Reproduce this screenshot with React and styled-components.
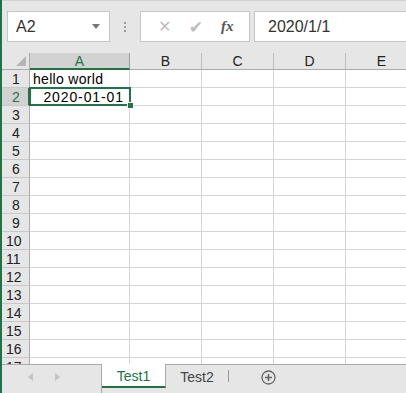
import React from 'react';
import styled, { createGlobalStyle } from 'styled-components';

const GREEN = '#217346';
const GRID = '#d4d4d4';

const GlobalStyle = createGlobalStyle`
  html, body {
    margin: 0;
    padding: 0;
    background: #ffffff;
    overflow: hidden;
  }
  * {
    box-sizing: border-box;
  }
`;

const Window = styled.div`
  width: 406px;
  height: 393px;
  display: flex;
  flex-direction: column;
  border-left: 2px solid ${GREEN};
  font-family: "Liberation Sans", "Noto Sans CJK JP", sans-serif;
  background: #ffffff;
  overflow: hidden;
`;

const Toolbar = styled.div`
  height: 53px;
  flex: none;
  display: flex;
  align-items: center;
  padding: 1px 0 1px 5px;
  background: #e6e6e6;
  border-top: 1px solid #d2d2d2;
`;

const Box = styled.div`
  height: 31px;
  width: ${p => p.$w};
  flex: ${p => (p.$grow ? '1' : 'none')};
  display: flex;
  align-items: center;
  background: #ffffff;
  border: 1px solid #c6c6c6;
  border-right: ${p => (p.$grow ? 'none' : '1px solid #c6c6c6')};
  margin-top: -1px;
`;

const NameText = styled.span`
  flex: 1;
  padding-left: 8px;
  font-size: 16px;
  color: #333;
`;

const DropArrow = styled.span`
  width: 0;
  height: 0;
  margin-right: 9px;
  border-left: 4px solid transparent;
  border-right: 4px solid transparent;
  border-top: 5px solid #777;
`;

const Dots = styled.div`
  width: 30px;
  display: flex;
  flex-direction: column;
  align-items: center;
  gap: 2px;
  & span {
    width: 2px;
    height: 2px;
    background: #9a9a9a;
  }
`;

const FxButtons = styled(Box)`
  justify-content: space-around;
  padding: 0 6px 0 8px;
  margin-right: 4px;
`;

const FxBtn = styled.span`
  width: 20px;
  text-align: center;
  color: ${p => (p.$active ? '#555' : '#bdbdbd')};
  font-size: ${p => (p.$active ? '15px' : p.$size || '17px')};
  font-family: ${p => (p.$active ? '"Liberation Serif", serif' : '"DejaVu Sans", sans-serif')};
  font-style: ${p => (p.$active ? 'italic' : 'normal')};
  font-weight: ${p => (p.$active ? 'bold' : 'normal')};
`;

const FormulaText = styled.span`
  padding-left: 13px;
  font-size: 16px;
  color: #333;
`;

const Sheet = styled.div`
  flex: 1;
  overflow: hidden;
`;

const Row = styled.div`
  display: flex;
  height: ${p => p.$h || 18}px;
`;

const Corner = styled.div`
  width: 28px;
  flex: none;
  background: #e6e6e6;
  border-right: 1px solid #ababab;
  border-bottom: 1px solid #ababab;
  display: flex;
  align-items: flex-end;
  justify-content: flex-end;
  padding: 0 3px 3px 0;
  & span {
    width: 0;
    height: 0;
    border-left: 10px solid transparent;
    border-bottom: 10px solid #b6b6b6;
  }
`;

const ColHead = styled.div`
  width: ${p => p.$w}px;
  flex: none;
  display: flex;
  align-items: center;
  justify-content: center;
  font-size: 14px;
  background: ${p => (p.$sel ? '#d2d2d2' : '#e6e6e6')};
  color: ${p => (p.$sel ? GREEN : '#222')};
  border-right: 1px solid ${p => (p.$sel ? '#9f9f9f' : '#bdbdbd')};
  border-bottom: ${p => (p.$sel ? `2px solid ${GREEN}` : '1px solid #ababab')};
  padding-top: ${p => (p.$sel ? '1px' : '0')};
`;

const RowHead = styled.div`
  width: 28px;
  flex: none;
  display: flex;
  align-items: center;
  padding-left: ${p => (p.$n > 9 ? 4 : 10)}px;
  font-size: 14px;
  background: ${p => (p.$sel ? '#d2d2d2' : '#e6e6e6')};
  color: ${p => (p.$sel ? GREEN : '#222')};
  border-right: ${p => (p.$sel ? `2px solid ${GREEN}` : '1px solid #ababab')};
  border-bottom: 1px solid #c8c8c8;
`;

const Cell = styled.div`
  position: relative;
  z-index: ${p => (p.$sel ? 2 : 'auto')};
  width: ${p => p.$w}px;
  flex: none;
  display: flex;
  align-items: center;
  justify-content: ${p => (p.$right ? 'flex-end' : 'flex-start')};
  padding: 0 5px 0 3px;
  font-size: 14px;
  color: #000;
  letter-spacing: ${p => (p.$right ? '0.9px' : '0.3px')};
  white-space: nowrap;
  border-right: 1px solid ${GRID};
  border-bottom: 1px solid ${GRID};
`;

const Selection = styled.div`
  position: absolute;
  left: -1px;
  top: -1px;
  right: -2px;
  bottom: -1px;
  border: 2px solid ${GREEN};
  pointer-events: none;
`;

const Handle = styled.div`
  position: absolute;
  right: -5px;
  bottom: -5px;
  width: 7px;
  height: 7px;
  background: ${GREEN};
  border: 1px solid #ffffff;
`;

const TabBar = styled.div`
  height: 29px;
  flex: none;
  display: flex;
  align-items: flex-start;
  background: #e6e6e6;
  border-top: 1px solid #ababab;
`;

const NavArrows = styled.div`
  width: 100px;
  height: 100%;
  display: flex;
  align-items: center;
  padding: 0 0 4px 26px;
  gap: 22px;
  border-right: 1px solid #ababab;
  & span {
    width: 0;
    height: 0;
    border-top: 4px solid transparent;
    border-bottom: 4px solid transparent;
  }
`;

const Prev = styled.span`
  border-right: 5px solid #c3c3c3;
`;

const Next = styled.span`
  border-left: 5px solid #c3c3c3;
`;

const Tab = styled.div`
  height: 24px;
  width: ${p => p.$w}px;
  display: flex;
  align-items: center;
  justify-content: center;
  font-size: 14px;
  background: ${p => (p.$active ? '#ffffff' : 'transparent')};
  color: ${p => (p.$active ? GREEN : '#444')};
  border-right: ${p => (p.$active ? '1px solid #ababab' : 'none')};
  border-bottom: ${p => (p.$active ? `2px solid ${GREEN}` : 'none')};
  margin-top: -1px;
  padding-top: 1px;
`;

const TabSep = styled.div`
  width: 1px;
  height: 12px;
  margin-top: 5px;
  background: #9a9a9a;
`;

const AddSheet = styled.div`
  margin: 5px 0 0 32px;
  width: 15px;
  height: 15px;
  display: flex;
`;

const columns = [
  { name: 'A', w: 100 },
  { name: 'B', w: 72 },
  { name: 'C', w: 72 },
  { name: 'D', w: 72 },
  { name: 'E', w: 72 },
];

const data = {
  1: { A: { text: 'hello world' } },
  2: { A: { text: '2020-01-01', right: true, selected: true } },
};

const rows = Array.from({ length: 17 }, (_, i) => i + 1);

const App = () => {
  return (
    <>
      <GlobalStyle />
      <Window>
        <Toolbar>
          <Box $w="103px">
            <NameText>A2</NameText>
            <DropArrow />
          </Box>
          <Dots>
            <span />
            <span />
            <span />
          </Dots>
          <FxButtons $w="110px">
            <FxBtn $size="16px">✕</FxBtn>
            <FxBtn $size="17px">✔</FxBtn>
            <FxBtn $active>fx</FxBtn>
          </FxButtons>
          <Box $grow>
            <FormulaText>2020/1/1</FormulaText>
          </Box>
        </Toolbar>

        <Sheet>
          <Row $h={17}>
            <Corner>
              <span />
            </Corner>
            {columns.map(c => (
              <ColHead key={c.name} $w={c.w} $sel={c.name === 'A'}>
                {c.name}
              </ColHead>
            ))}
          </Row>
          {rows.map(r => (
            <Row key={r}>
              <RowHead $n={r} $sel={r === 2}>{r}</RowHead>
              {columns.map(c => {
                const cell = (data[r] || {})[c.name];
                return (
                  <Cell
                    key={c.name}
                    $w={c.w}
                    $right={cell && cell.right}
                    $sel={cell && cell.selected}
                  >
                    {cell && cell.text}
                    {cell && cell.selected && (
                      <Selection>
                        <Handle />
                      </Selection>
                    )}
                  </Cell>
                );
              })}
            </Row>
          ))}
        </Sheet>

        <TabBar>
          <NavArrows>
            <Prev />
            <Next />
          </NavArrows>
          <Tab $w={64} $active>Test1</Tab>
          <Tab $w={62}>Test2</Tab>
          <TabSep />
          <AddSheet>
            <svg width="15" height="15" viewBox="0 0 15 15">
              <circle cx="7.5" cy="7.5" r="6.5" fill="none" stroke="#666" strokeWidth="1.3" />
              <path d="M7.5 4v7M4 7.5h7" stroke="#666" strokeWidth="1.6" />
            </svg>
          </AddSheet>
        </TabBar>
      </Window>
    </>
  );
};

export default App;
